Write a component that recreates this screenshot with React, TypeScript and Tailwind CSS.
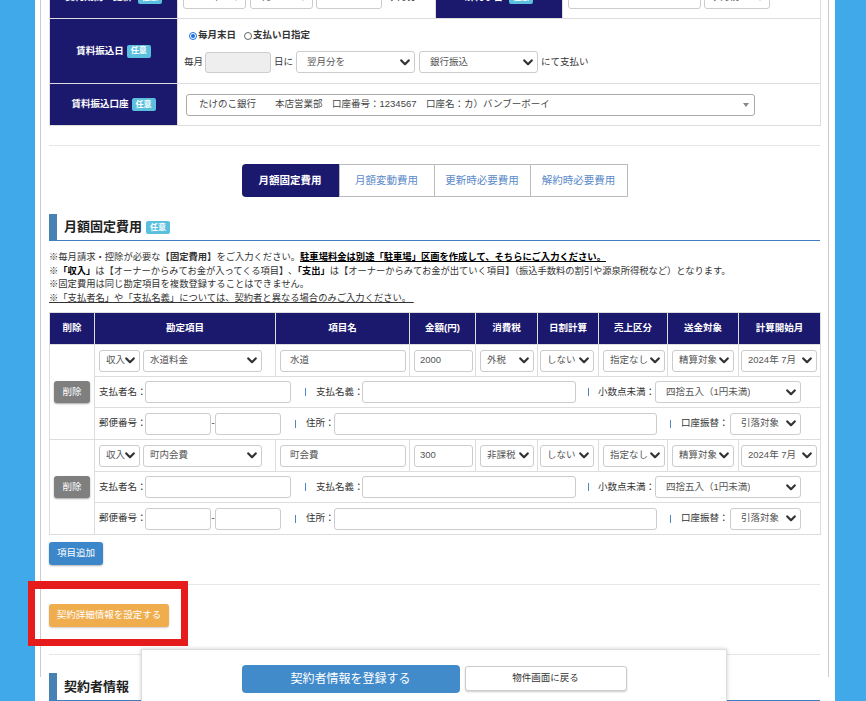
import React from "react";

const Chev = () => (
  <svg width="10" height="7" viewBox="0 0 10 7" className="shrink-0">
    <polyline points="1.3,1.4 5,5.2 8.7,1.4" fill="none" stroke="#333" strokeWidth="2.2" strokeLinecap="round" strokeLinejoin="round" />
  </svg>
);

function Sel({ text, className = "" }: { text: string; className?: string }) {
  return (
    <div className={`flex h-[22px] shrink-0 items-center justify-between rounded-[3px] border border-[#ccc] bg-white pr-[4px] text-[#555] ${className}`}>
      <span className="overflow-hidden whitespace-nowrap">{text}</span>
      <Chev />
    </div>
  );
}

function Inp({ text = "", className = "" }: { text?: string; className?: string }) {
  return (
    <div className={`flex h-[22px] shrink-0 items-center rounded-[3px] border border-[#ccc] bg-white text-[#555] ${className}`}>
      {text}
    </div>
  );
}

const Badge = () => (
  <span className="inline-flex h-[13px] items-center rounded-[2px] bg-[#5bc0de] px-[4px] text-[8px] font-bold leading-none text-white">任意</span>
);

const Sep = ({ className = "" }: { className?: string }) => (
  <span className={`block h-[8px] w-[1px] shrink-0 bg-[#4d86c6] ${className}`} />
);

function ItemRows({ kind, item, name, amount, tax }: { kind: string; item: string; name: string; amount: string; tax: string }) {
  const td = "border border-[#ddd] px-[4px]";
  return (
    <>
      <tr className="h-[32px]">
        <td rowSpan={3} className="border border-[#ddd] text-center align-middle">
          <div className="mx-auto flex h-[22px] w-[36px] items-center justify-center rounded-[3px] bg-[#7f7f7f] text-white shadow-[0_1px_2px_rgba(0,0,0,0.35)]">削除</div>
        </td>
        <td className={td}>
          <div className="flex gap-[3px]">
            <Sel text={kind} className="w-[41px] pl-[6px]" />
            <Sel text={item} className="w-[119px] pl-[6px]" />
          </div>
        </td>
        <td className={td}>
          <Inp text={name} className="w-[126px] pl-[9px]" />
        </td>
        <td className={td}>
          <Inp text={amount} className="w-[59px] pl-[5px]" />
        </td>
        <td className={td}>
          <Sel text={tax} className="w-[54px] pl-[6px]" />
        </td>
        <td className="border border-[#ddd] px-[2px]">
          <Sel text="しない" className="w-[54px] pl-[6px]" />
        </td>
        <td className={td}>
          <Sel text="指定なし" className="w-[62px] pl-[6px]" />
        </td>
        <td className={td}>
          <Sel text="精算対象" className="w-[62px] pl-[6px]" />
        </td>
        <td className="border border-[#ddd] px-[2px]">
          <Sel text="2024年 7月" className="w-[76px] pl-[6px]" />
        </td>
      </tr>
      <tr className="h-[31px]">
        <td colSpan={8} className={td}>
          <div className="flex items-center">
            <span className="w-[46px] shrink-0 whitespace-nowrap">支払者名：</span>
            <Inp className="w-[146px]" />
            <Sep className="ml-[14px]" />
            <span className="ml-[10px] w-[46px] shrink-0 whitespace-nowrap">支払名義：</span>
            <Inp className="w-[214px]" />
            <Sep className="ml-[12px]" />
            <span className="ml-[9px] w-[57px] shrink-0 whitespace-nowrap">小数点未満：</span>
            <Sel text="四捨五入（1円未満)" className="w-[146px] pl-[10px]" />
          </div>
        </td>
      </tr>
      <tr className="h-[32px]">
        <td colSpan={8} className={td}>
          <div className="flex items-center">
            <span className="w-[46px] shrink-0 whitespace-nowrap">郵便番号：</span>
            <Inp className="w-[66px]" />
            <span className="w-[4px] text-center">-</span>
            <Inp className="w-[66px]" />
            <Sep className="ml-[14px]" />
            <span className="ml-[10px] w-[28px] shrink-0 whitespace-nowrap">住所：</span>
            <Inp className="w-[323px]" />
            <Sep className="ml-[13px]" />
            <span className="ml-[10px] w-[49px] shrink-0 whitespace-nowrap">口座振替：</span>
            <Sel text="引落対象" className="w-[71px] pl-[10px]" />
          </div>
        </td>
      </tr>
    </>
  );
}

export default function App() {
  const labelTd = "border border-[#ddd] bg-[#1b196e] text-center font-bold text-white";
  const th = "border border-[#ddd] bg-[#1b196e] text-center font-bold text-white";
  return (
    <div className="relative flex h-[701px] w-[866px] overflow-hidden bg-white font-['Liberation_Sans','Noto_Sans_CJK_JP',sans-serif] text-[9.5px] text-[#333]">
      <div className="w-[35px] shrink-0 bg-[#40a9ea]" />
      <div className="w-[800px] shrink-0 pl-[5px] pr-[6px]">
        <div className="h-full border-x border-[#ccc] px-[8px]">
          {/* top table */}
          <table className="-mt-[24px] w-[771px] table-fixed border-collapse">
            <colgroup>
              <col className="w-[128px]" />
              <col className="w-[258px]" />
              <col className="w-[127px]" />
              <col className="w-[258px]" />
            </colgroup>
            <tbody>
              <tr className="h-[42px]">
                <td className={labelTd}>
                  <div className="flex items-center justify-center gap-[6px]">
                    <span>契約期間・更新</span>
                    <Badge />
                  </div>
                </td>
                <td className="border border-[#ddd] pl-[5px]">
                  <div className="flex items-center">
                    <Sel text="2024年" className="w-[63px] pl-[6px]" />
                    <Sel text="7月" className="ml-[4px] w-[63px] pl-[6px]" />
                    <Inp className="ml-[3px] w-[66px]" />
                    <span className="ml-[6px]">ヶ月分</span>
                  </div>
                </td>
                <td className={labelTd}>
                  <div className="flex items-center justify-center gap-[6px]">
                    <span>解約予告</span>
                    <Badge />
                  </div>
                </td>
                <td className="border border-[#ddd] pl-[5px]">
                  <div className="flex items-center">
                    <Inp className="w-[133px]" />
                    <Sel text="ヶ月前" className="ml-[3px] w-[66px] pl-[6px]" />
                  </div>
                </td>
              </tr>
              <tr className="h-[65px]">
                <td className={labelTd}>
                  <div className="flex items-center justify-center gap-[3px]">
                    <span>賃料振込日</span>
                    <Badge />
                  </div>
                </td>
                <td colSpan={3} className="border border-[#ddd] pl-[6px] pt-[10px] align-top">
                  <div className="flex h-[13px] items-center pl-[5px] font-bold">
                    <span className="flex h-[8px] w-[8px] items-center justify-center rounded-full border border-[#1a6fe0] bg-white">
                      <span className="h-[4px] w-[4px] rounded-full bg-[#1a6fe0]" />
                    </span>
                    <span className="ml-[1px]">毎月末日</span>
                    <span className="ml-[8px] h-[8px] w-[8px] rounded-full border border-[#666] bg-white" />
                    <span className="ml-[1px]">支払い日指定</span>
                  </div>
                  <div className="mt-[9px] flex items-center">
                    <span>毎月</span>
                    <div className="ml-[2px] h-[21px] w-[66px] rounded-[3px] border border-[#ccc] bg-[#eee]" />
                    <span className="ml-[3px]">日に</span>
                    <Sel text="翌月分を" className="ml-[3px] h-[21px] w-[119px] pl-[10px]" />
                    <Sel text="銀行振込" className="ml-[4px] h-[21px] w-[119px] pl-[10px]" />
                    <span className="ml-[3px]">にて支払い</span>
                  </div>
                </td>
              </tr>
              <tr className="h-[42px]">
                <td className={labelTd}>
                  <div className="flex items-center justify-center gap-[3px]">
                    <span>賃料振込口座</span>
                    <Badge />
                  </div>
                </td>
                <td colSpan={3} className="border border-[#ddd] pl-[8px]">
                  <div className="flex h-[22px] w-[569px] items-center justify-between rounded-[3px] border border-[#aaa] bg-white pl-[12px] pr-[5px] text-[#444]">
                    <span className="whitespace-pre">たけのこ銀行　　本店営業部　口座番号：1234567　口座名：カ）バンブーボーイ</span>
                    <svg width="6" height="4" viewBox="0 0 6 4"><polygon points="0,0 6,0 3,4" fill="#888" /></svg>
                  </div>
                </td>
              </tr>
            </tbody>
          </table>

          <div className="mt-[19px] border-t border-[#e6e6e6]" />

          {/* tabs */}
          <div className="mt-[18px] flex h-[33px] justify-center text-[10.5px]">
            <div className="flex w-[97px] items-center justify-center rounded-l-[4px] bg-[#1b196e] font-bold text-white">月額固定費用</div>
            <div className="flex w-[96px] items-center justify-center border border-[#bbb] text-[#5a8ac9]">月額変動費用</div>
            <div className="flex w-[96px] items-center justify-center border-y border-r border-[#bbb] text-[#5a8ac9]">更新時必要費用</div>
            <div className="flex w-[97px] items-center justify-center border-y border-r border-[#bbb] text-[#5a8ac9]">解約時必要費用</div>
          </div>

          {/* heading */}
          <div className="mt-[17px] flex h-[27px] items-center border-b-[1.5px] border-[#3f7fc0]">
            <div className="h-full w-[8px] bg-[#4682b4]" />
            <span className="ml-[7px] text-[13px] font-bold text-[#222]">月額固定費用</span>
            <span className="ml-[4px]"><Badge /></span>
          </div>

          {/* notes */}
          <div className="mt-[10px] text-[9.3px] leading-[13.5px]">
            <div className="whitespace-nowrap">
              ※毎月請求・控除が必要な<b>【固定費用】</b>をご入力ください。
              <b className="text-black underline">駐車場料金は別途「駐車場」区画を作成して、そちらにご入力ください。</b>
            </div>
            <div className="whitespace-nowrap tracking-[-0.05px]">
              ※<b className="text-black">「収入」</b>は【オーナーからみてお金が入ってくる項目】､<b className="text-black">「支出」</b>は【オーナーからみてお金が出ていく項目】（振込手数料の割引や源泉所得税など）となります。
            </div>
            <div className="whitespace-nowrap">※固定費用は同じ勘定項目を複数登録することはできません。</div>
            <div className="whitespace-pre underline">※「支払者名」や「支払名義」については、契約者と異なる場合のみご入力ください。 </div>
          </div>

          {/* main table */}
          <table className="mt-[7px] w-[771px] table-fixed border-collapse">
            <colgroup>
              <col className="w-[45px]" />
              <col className="w-[181px]" />
              <col className="w-[134px]" />
              <col className="w-[66px]" />
              <col className="w-[62px]" />
              <col className="w-[61px]" />
              <col className="w-[69px]" />
              <col className="w-[71px]" />
              <col className="w-[82px]" />
            </colgroup>
            <thead>
              <tr className="h-[32px]">
                <th className={th}>削除</th>
                <th className={th}>勘定項目</th>
                <th className={th}>項目名</th>
                <th className={th}>金額(円)</th>
                <th className={th}>消費税</th>
                <th className={th}>日割計算</th>
                <th className={th}>売上区分</th>
                <th className={th}>送金対象</th>
                <th className={th}>計算開始月</th>
              </tr>
            </thead>
            <tbody>
              <ItemRows kind="収入" item="水道料金" name="水道" amount="2000" tax="外税" />
              <ItemRows kind="収入" item="町内会費" name="町会費" amount="300" tax="非課税" />
            </tbody>
          </table>

          <div className="mt-[7px] flex h-[23px] w-[54px] items-center justify-center rounded-[3px] bg-[#3b87c9] text-white shadow-[0_1px_2px_rgba(0,0,0,0.3)]">項目追加</div>

          <div className="mt-[19px] border-t border-[#e6e6e6]" />

          <div className="mt-[19px] flex h-[23px] w-[120px] items-center justify-center rounded-[3px] bg-[#f0ad4e] text-white shadow-[0_1px_2px_rgba(0,0,0,0.2)]">契約詳細情報を設定する</div>

          <div className="mt-[27px] border-t border-[#e6e6e6]" />

          <div className="mt-[18px] flex h-[28px] items-center border-b-[1.5px] border-[#3f7fc0]">
            <div className="h-full w-[8px] bg-[#4682b4]" />
            <span className="ml-[7px] text-[13px] font-bold text-[#222]">契約者情報</span>
          </div>
        </div>
      </div>
      <div className="flex-1 bg-[#40a9ea]" />

      {/* red annotation box */}
      <div className="absolute left-[28px] top-[581px] h-[65px] w-[160px] border-[7px] border-t-[8px] border-[#e61c1c]" />

      {/* fixed bottom bar */}
      <div className="absolute left-[141px] top-[649px] flex h-[60px] w-[586px] items-start justify-center gap-[5px] border border-[#ddd] bg-white pt-[15px] shadow-[0_0_4px_rgba(0,0,0,0.2)]">
        <div className="flex h-[28px] w-[218px] items-center justify-center rounded-[4px] bg-[#428bca] text-[12px] text-white">契約者情報を登録する</div>
        <div className="mt-[1px] flex h-[25px] w-[162px] items-center justify-center rounded-[3px] border border-[#ccc] bg-white text-[#333] shadow-[0_1px_2px_rgba(0,0,0,0.2)]">物件画面に戻る</div>
      </div>
    </div>
  );
}
